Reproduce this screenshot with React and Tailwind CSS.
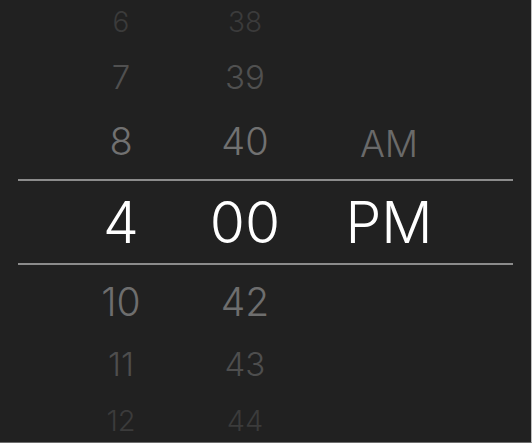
import React from "react";

const font = { fontFamily: "Inter, 'Noto Sans', sans-serif" };

function Cell({ h, size, color, children }) {
  return (
    <div className={`flex items-center justify-center ${h}`}>
      <span className={`leading-none font-light ${size} ${color}`}>{children}</span>
    </div>
  );
}

export default function App() {
  return (
    <div
      className="w-[532px] h-[443px] bg-[#212121] overflow-hidden flex flex-col border-r border-b border-r-[#bdbdbd] border-b-[#6e6e6e]"
      style={font}
    >
      {/* upper rows */}
      <div className="h-[179px] shrink-0 flex pl-[61px]">
        <div className="w-[120px] flex flex-col">
          <Cell h="h-[44px]" size="text-[28px]" color="text-[#3b3b3b]">6</Cell>
          <Cell h="h-[66px]" size="text-[33px]" color="text-[#505050]">7</Cell>
          <Cell h="h-[62px]" size="text-[38px]" color="text-[#717171]">8</Cell>
        </div>
        <div className="w-[120px] ml-[4px] flex flex-col">
          <Cell h="h-[44px]" size="text-[28px]" color="text-[#3b3b3b]">38</Cell>
          <Cell h="h-[66px]" size="text-[33px]" color="text-[#505050]">39</Cell>
          <Cell h="h-[62px]" size="text-[38px]" color="text-[#717171]">40</Cell>
        </div>
        <div className="w-[120px] ml-[24px] flex flex-col">
          <div className="h-[110px]" />
          <div className="h-[67px] flex items-center justify-center">
            <span className="leading-none font-light text-[37px] text-[#6a6a6a]">AM</span>
          </div>
        </div>
      </div>

      {/* selected band */}
      <div className="h-[86px] shrink-0 mx-[18px] border-y-2 border-[#8c8c8c] flex pl-[43px]">
        <Cell h="h-full w-[120px]" size="text-[57px]" color="text-white">4</Cell>
        <div className="w-[120px] ml-[4px] flex items-center justify-center">
          <span className="leading-none font-light text-[57px] text-white">00</span>
        </div>
        <div className="w-[120px] ml-[24px] flex items-center justify-center">
          <span className="leading-none font-light text-[57px] text-white">PM</span>
        </div>
      </div>

      {/* lower rows */}
      <div className="flex-1 flex pl-[61px]">
        <div className="w-[120px] flex flex-col">
          <Cell h="h-[73px] shrink-0" size="text-[39px]" color="text-[#6e6e6e]">10</Cell>
          <Cell h="h-[52px] shrink-0" size="text-[33px]" color="text-[#4e4e4e]">11</Cell>
          <Cell h="h-[60px] shrink-0" size="text-[29px]" color="text-[#3b3b3b]">12</Cell>
        </div>
        <div className="w-[120px] ml-[4px] flex flex-col">
          <Cell h="h-[73px] shrink-0" size="text-[39px]" color="text-[#6e6e6e]">42</Cell>
          <Cell h="h-[52px] shrink-0" size="text-[33px]" color="text-[#4e4e4e]">43</Cell>
          <Cell h="h-[60px] shrink-0" size="text-[29px]" color="text-[#3b3b3b]">44</Cell>
        </div>
      </div>
    </div>
  );
}
